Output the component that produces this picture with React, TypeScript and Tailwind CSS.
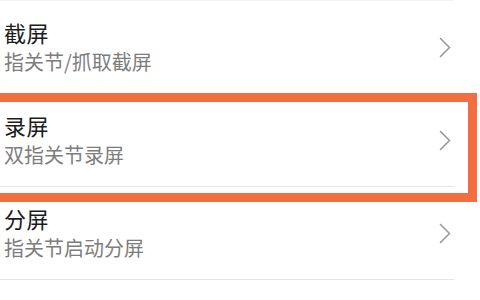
import React from 'react';

const items = [
  { title: '截屏', desc: '指关节/抓取截屏' },
  { title: '录屏', desc: '双指关节录屏' },
  { title: '分屏', desc: '指关节启动分屏' },
];

const Chevron: React.FC = () => (
  <svg width="12" height="21" viewBox="0 0 12 21" fill="none" className="shrink-0">
    <path d="M1.5 1.5 L10.5 10.5 L1.5 19.5" stroke="#9a9a9a" strokeWidth="1.6" strokeLinecap="round" strokeLinejoin="round" />
  </svg>
);

const App: React.FC = () => {
  return (
    <div
      className="relative w-[480px] h-[300px] overflow-hidden bg-white"
      style={{ fontFamily: '"Noto Sans CJK SC", "Noto Sans", sans-serif' }}
    >
      <div className="w-[454px] border-t border-gray-100">
        {items.map((item, index) => (
          <div key={index} className="flex items-center justify-between h-[93px] pl-1 pr-[3px] border-b border-[#e6e6e6]">
            <div className="flex flex-col">
              <span className="text-[22px] leading-[30px] tracking-[0.5px] text-[#1c1c1c]">{item.title}</span>
              <span className="text-[20px] leading-[30px] text-[#7d7d7d]">{item.desc}</span>
            </div>
            <Chevron />
          </div>
        ))}
      </div>

      {/* highlight box */}
      <div className="absolute left-[-12px] top-[93px] w-[489px] h-[109px] border-[9px] border-[#f26d3f]" />
    </div>
  );
};

export default App;
